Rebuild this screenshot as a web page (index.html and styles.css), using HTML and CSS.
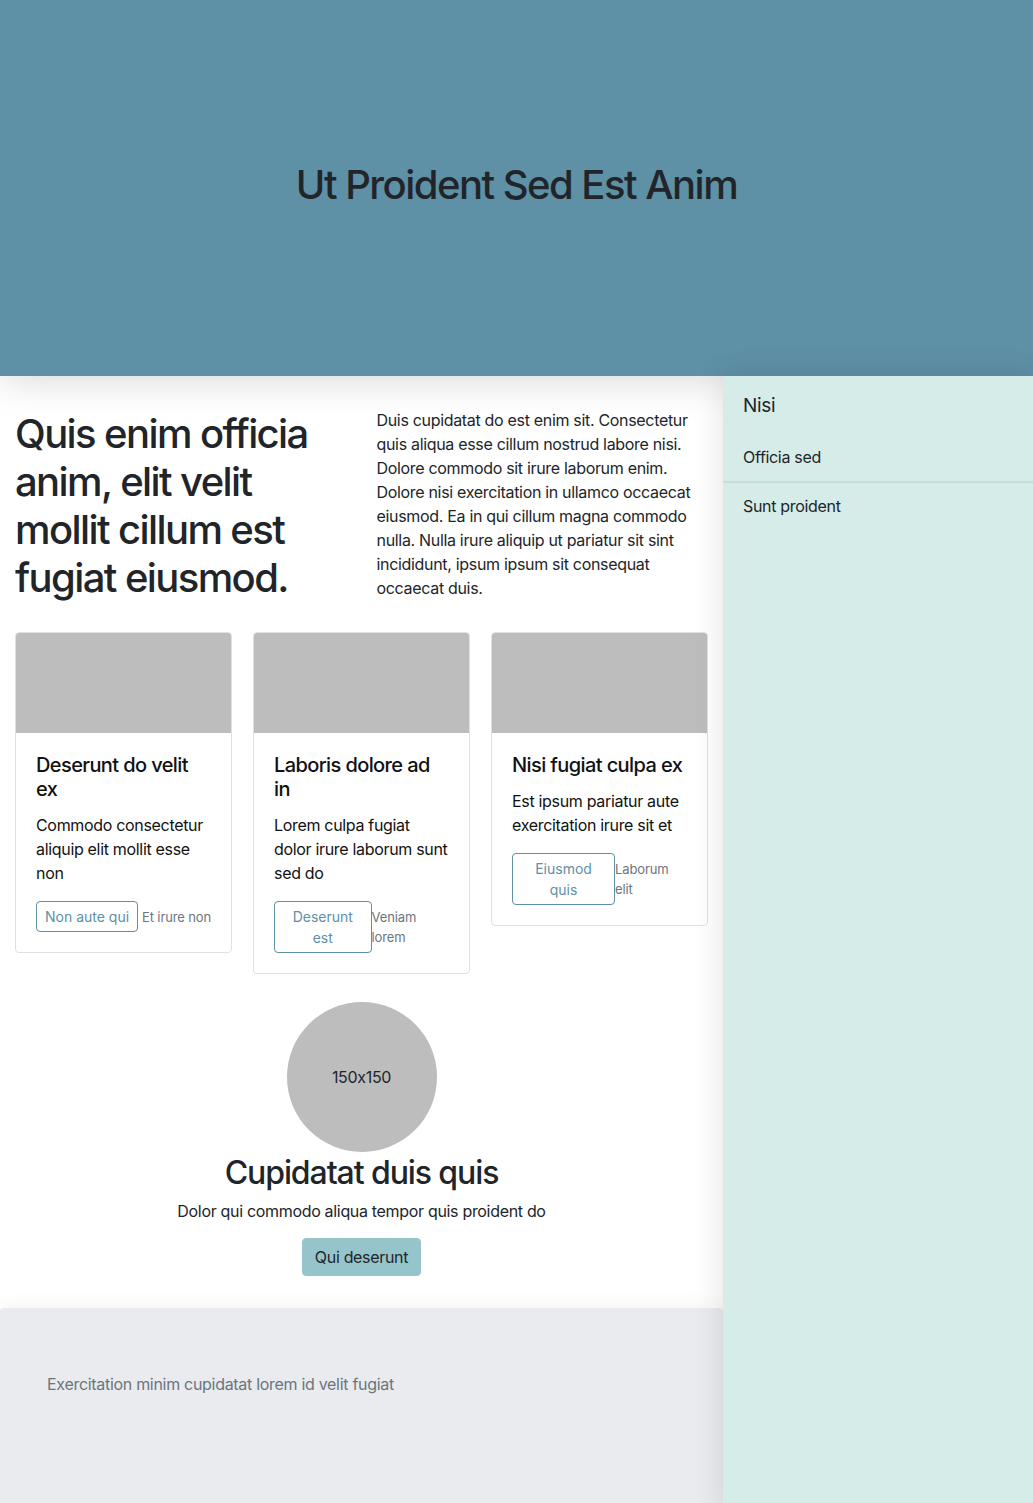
FILE: index.html
```html
<!DOCTYPE html>
<html lang="en">
<head>
<meta charset="utf-8">
<title>Ut Proident Sed Est Anim</title>
<link rel="stylesheet" href="styles.css">
</head>
<body>
<header class="hero">
  <h1 class="hero-title">Ut Proident Sed Est Anim</h1>
</header>
<div class="layout">
  <div class="main">
    <section class="intro">
      <h1 class="intro-title">Quis enim officia anim, elit velit mollit cillum est fugiat eiusmod.</h1>
      <p class="intro-text">Duis cupidatat do est enim sit. Consectetur quis aliqua esse cillum nostrud labore nisi. Dolore commodo sit irure laborum enim. Dolore nisi exercitation in ullamco occaecat eiusmod. Ea in qui cillum magna commodo nulla. Nulla irure aliquip ut pariatur sit sint incididunt, ipsum ipsum sit consequat occaecat duis.</p>
    </section>
    <section class="cards">
      <div class="card">
        <div class="card-img"></div>
        <div class="card-body">
          <h5 class="card-title">Deserunt do velit ex</h5>
          <p class="card-text">Commodo consectetur aliquip elit mollit esse non</p>
          <div class="card-actions">
            <a class="btn-outline">Non aute qui</a>
            <a class="card-link">Et irure non</a>
          </div>
        </div>
      </div>
      <div class="card">
        <div class="card-img"></div>
        <div class="card-body">
          <h5 class="card-title">Laboris dolore ad in</h5>
          <p class="card-text">Lorem culpa fugiat dolor irure laborum sunt sed do</p>
          <div class="card-actions">
            <a class="btn-outline">Deserunt est</a>
            <a class="card-link">Veniam lorem</a>
          </div>
        </div>
      </div>
      <div class="card">
        <div class="card-img"></div>
        <div class="card-body">
          <h5 class="card-title">Nisi fugiat culpa ex</h5>
          <p class="card-text">Est ipsum pariatur aute exercitation irure sit et</p>
          <div class="card-actions">
            <a class="btn-outline">Eiusmod quis</a>
            <a class="card-link">Laborum elit</a>
          </div>
        </div>
      </div>
    </section>
    <section class="promo">
      <div class="avatar">150x150</div>
      <h2 class="promo-title">Cupidatat duis quis</h2>
      <p class="promo-text">Dolor qui commodo aliqua tempor quis proident do</p>
      <a class="btn-fill">Qui deserunt</a>
    </section>
    <footer class="footer">
      <p class="footer-text">Exercitation minim cupidatat lorem id velit fugiat</p>
    </footer>
  </div>
  <aside class="sidebar">
    <h5 class="side-title">Nisi</h5>
    <ul class="side-list">
      <li class="side-item">Officia sed</li>
      <li class="side-item">Sunt proident</li>
    </ul>
  </aside>
</div>
</body>
</html>
```

FILE: styles.css
```css
* { box-sizing: border-box; }

body {
  margin: 0;
  font-family: Inter, "Noto Sans", sans-serif;
  font-size: 16px;
  line-height: 1.5;
  letter-spacing: -0.02em;
  font-feature-settings: "calt" 0;
  color: #212529;
  background: #fff;
}

.hero {
  height: 376px;
  background: #5e90a6;
  display: flex;
  align-items: center;
  justify-content: center;
  box-shadow: 0 0 40px rgba(0, 0, 0, 0.18);
}

.hero-title {
  margin: 0 0 6px;
  font-size: 40px;
  font-weight: 500;
  line-height: 1.2;
  letter-spacing: -0.038em;
  color: #212529;
}

.layout {
  display: flex;
  align-items: stretch;
}

.main {
  flex: 0 0 723px;
  width: 723px;
}

.sidebar {
  flex: 1;
  background: #d6ece9;
  box-shadow: 0 0 30px rgba(0, 0, 0, 0.12);
}

.intro {
  display: grid;
  grid-template-columns: 1fr 1fr;
  column-gap: 30px;
  padding: 32px 15px 0;
}

.intro-title {
  margin: 2px 0 8px;
  font-size: 40px;
  font-weight: 500;
  line-height: 1.2;
  letter-spacing: -0.04em;
}

.intro-text {
  margin: 0 0 16px;
}

.cards {
  display: grid;
  grid-template-columns: repeat(3, 1fr);
  column-gap: 21px;
  align-items: start;
  padding: 0 15px;
  margin-top: 16px;
}

.card {
  border: 1px solid #dfe2e5;
  border-radius: 4px;
  overflow: hidden;
  background: #fff;
}

.card-img {
  height: 100px;
  background: #bdbdbd;
}

.card-body {
  padding: 20px;
}

.card-title {
  margin: 0 0 12px;
  font-size: 20px;
  font-weight: 500;
  line-height: 1.2;
  letter-spacing: -0.03em;
  color: #111;
}

.card-text {
  margin: 0 0 16px;
  color: #111;
}

.card-actions {
  display: flex;
  justify-content: space-between;
  align-items: center;
}

.btn-outline {
  display: block;
  padding: 4px 8px;
  border: 1px solid #5e90a6;
  border-radius: 4px;
  color: #5e90a6;
  font-size: 14px;
  line-height: 1.5;
  letter-spacing: 0;
  text-align: center;
}

.card-link {
  display: block;
  font-size: 13px;
  line-height: 20px;
  letter-spacing: -0.01em;
  color: #6c757d;
}

.promo {
  display: flex;
  flex-direction: column;
  align-items: center;
  margin-top: 28px;
  padding-bottom: 32px;
}

.avatar {
  width: 150px;
  height: 150px;
  border-radius: 50%;
  background: #bdbdbd;
  display: flex;
  align-items: center;
  justify-content: center;
  font-size: 16px;
  color: #212529;
}

.promo-title {
  margin: 2px 0 7px;
  font-size: 32px;
  font-weight: 500;
  line-height: 1.2;
  letter-spacing: -0.034em;
}

.promo-text {
  margin: 0 0 15px;
}

.btn-fill {
  display: block;
  padding: 6px 12px;
  border: 1px solid #95c5cb;
  border-radius: 4px;
  background: #95c5cb;
  color: #212529;
  line-height: 24px;
}

.footer {
  background: #e9ebee;
  border-radius: 4px 4px 0 0;
  padding: 64px 47px 120px;
  box-shadow: 0 0 20px rgba(0, 0, 0, 0.06);
}

.footer-text {
  margin: 0;
  color: #6c757d;
  letter-spacing: -0.3px;
}

.side-title {
  margin: 0;
  padding: 18px 20px 15px;
  font-size: 19px;
  font-weight: 400;
  line-height: 24px;
}

.side-list {
  list-style: none;
  margin: 0;
  padding: 0;
}

.side-item {
  padding: 12px 20px;
  line-height: 24px;
}

.side-item + .side-item {
  border-top: 2px solid #c6dedb;
  padding-top: 11px;
}
```
